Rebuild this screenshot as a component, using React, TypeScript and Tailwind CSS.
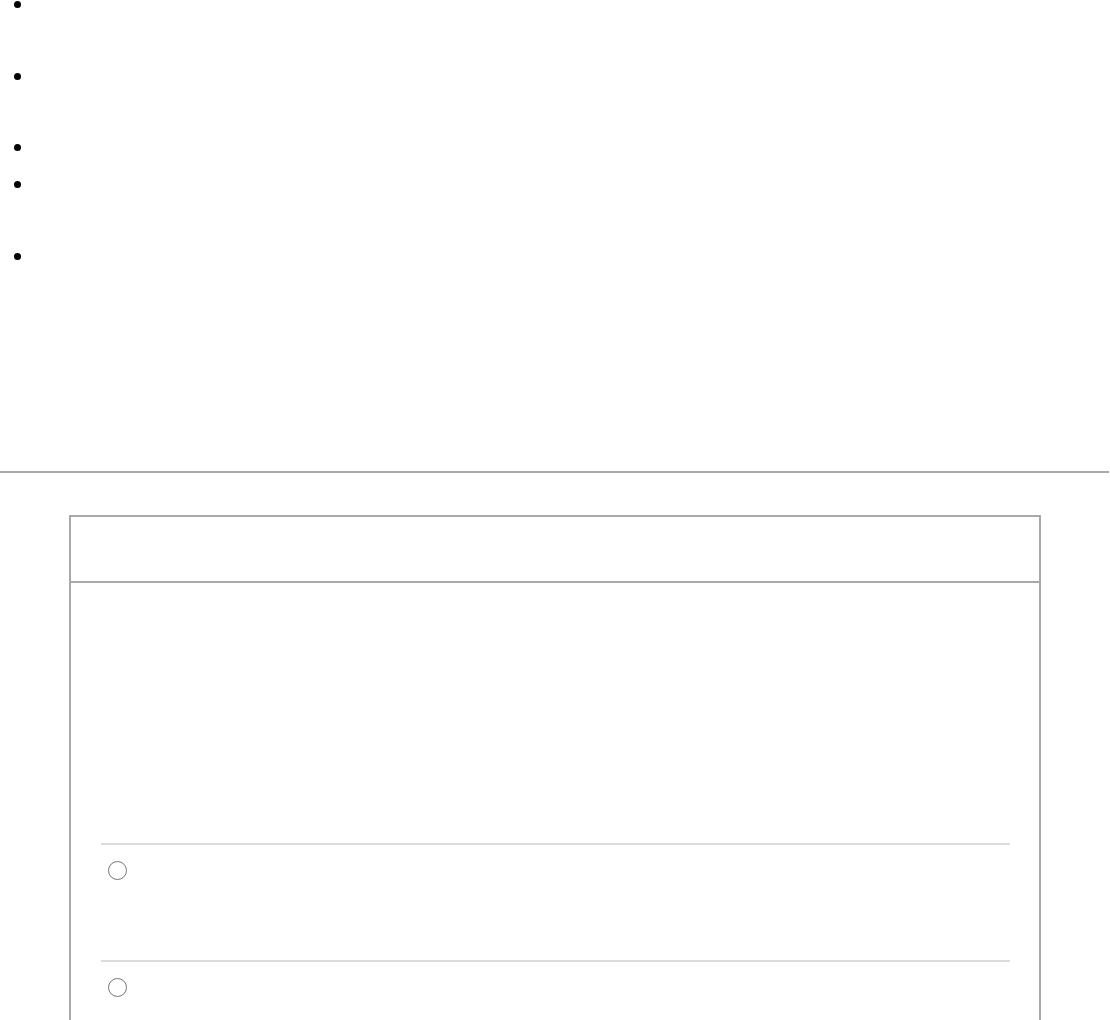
import React from "react";

const bulletRows = [72, 71, 37, 72, 72];

const Option = () => (
  <div className="h-[117px] border-t-2 border-[#dcdcdc] pt-4 pl-[7px]">
    <span className="block w-[19px] h-[19px] rounded-full border border-[#767676] bg-white" />
  </div>
);

export default function App() {
  return (
    <div className="h-[1020px] overflow-hidden bg-white font-['Liberation_Sans',Arial,sans-serif]">
      <div className="h-[479px] -mt-2">
        <ul className="flex flex-col">
          {bulletRows.map((h, i) => (
            <li key={i} className="flex items-start pl-[14px]" style={{ height: h }}>
              <span className="mt-[9px] w-[7px] h-[7px] rounded-full bg-black" />
            </li>
          ))}
        </ul>
      </div>
      <hr className="border-t-2 border-[#a9a9a9] w-[1109px]" />
      <div className="mt-[42px] ml-[69px] w-[972px] border-2 border-[#a9a9a9] h-[600px]">
        <div className="h-[66px] border-b-2 border-[#a9a9a9]" />
        <div className="pt-[260px] pl-[30px] pr-[29px]">
          <Option />
          <Option />
        </div>
      </div>
    </div>
  );
}
